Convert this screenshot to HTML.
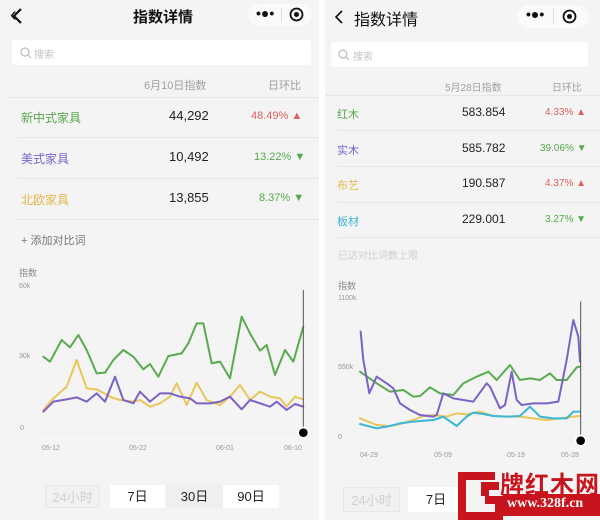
<!DOCTYPE html>
<html><head><meta charset="utf-8"><style>
*{margin:0;padding:0;box-sizing:border-box}
body{width:600px;height:520px;background:#fff;font-family:"Liberation Sans","Noto Sans CJK SC",sans-serif;position:relative;overflow:hidden}
.p{position:absolute;background:#f4f4f4}
.a{position:absolute;white-space:nowrap}
.line{position:absolute;height:1px;background:#e6e6e6}
.btn{position:absolute;background:#fff;font-size:13px;text-align:center;color:#222}
</style></head><body>
<!-- LEFT PANEL -->
<div class="p" style="left:0;top:0;width:319px;height:520px"></div>
<div class="a" style="left:10px;top:4px;font-size:20px;color:#111">&#x2039;</div>
<svg class="a" style="left:10px;top:7px" width="14" height="18"><path d="M11 2 L4 9 L11 16" fill="none" stroke="#111" stroke-width="2.2"/></svg>
<div class="a" style="left:133px;top:6px;font-size:15px;font-weight:bold;color:#111">指数详情</div>
<div class="a" style="left:248px;top:4px;width:64px;height:22px;border-radius:11px;background:#fafafa"></div>
<div class="a" style="left:256px;top:5px;font-size:14px;font-weight:bold;color:#111">•●•</div>
<div class="a" style="left:281px;top:8px;width:1px;height:14px;background:#ddd"></div>
<svg class="a" style="left:289px;top:7px" width="15" height="15"><circle cx="7.5" cy="7.5" r="6" fill="none" stroke="#111" stroke-width="1.8"/><circle cx="7.5" cy="7.5" r="2.5" fill="#111"/></svg>
<div class="a" style="left:12px;top:40px;width:299px;height:25px;background:#fff;border-radius:3px"></div>
<svg class="a" style="left:20px;top:47px" width="12" height="12"><circle cx="5" cy="5" r="4" fill="none" stroke="#bbb" stroke-width="1.2"/><path d="M8 8 L11 11" stroke="#bbb" stroke-width="1.2"/></svg>
<div class="a" style="left:34px;top:46px;font-size:10px;color:#c4c4c4">搜索</div>
<div class="a" style="left:144px;top:77px;font-size:11px;color:#a0a0a0">6月10日指数</div>
<div class="a" style="left:268px;top:77px;font-size:11px;color:#a0a0a0">日环比</div>
<div class="line" style="left:6px;top:97px;width:313px"></div>
<div class="a" style="left:21px;top:109px;font-size:12px;color:#58a84d">新中式家具</div>
<div class="a" style="left:169px;top:108px;font-size:13px;color:#222">44,292</div>
<div class="a" style="left:251px;top:110px;font-size:11px;color:#d9625d">48.49% ▲</div>
<div class="line" style="left:18px;top:137px;width:301px"></div>
<div class="a" style="left:21px;top:150px;font-size:12px;color:#7b63c8">美式家具</div>
<div class="a" style="left:169px;top:149px;font-size:13px;color:#222">10,492</div>
<div class="a" style="left:254px;top:151px;font-size:11px;color:#55a84c">13.22% ▼</div>
<div class="line" style="left:18px;top:178px;width:301px"></div>
<div class="a" style="left:21px;top:191px;font-size:12px;color:#e1b84a">北欧家具</div>
<div class="a" style="left:169px;top:190px;font-size:13px;color:#222">13,855</div>
<div class="a" style="left:259px;top:192px;font-size:11px;color:#55a84c">8.37% ▼</div>
<div class="line" style="left:18px;top:219px;width:301px"></div>
<div class="a" style="left:21px;top:232px;font-size:11px;color:#777">+ 添加对比词</div>
<div class="a" style="left:19px;top:266px;font-size:9px;color:#888">指数</div>
<div class="a" style="left:19px;top:283px;font-size:7px;color:#999">60k</div>
<div class="a" style="left:19px;top:353px;font-size:7px;color:#999">30k</div>
<div class="a" style="left:20px;top:425px;font-size:7px;color:#999">0</div>
<div class="a" style="left:42px;top:445px;font-size:7px;color:#999">05-12</div>
<div class="a" style="left:129px;top:445px;font-size:7px;color:#999">05-22</div>
<div class="a" style="left:216px;top:445px;font-size:7px;color:#999">06-01</div>
<div class="a" style="left:284px;top:445px;font-size:7px;color:#999">06-10</div>
<svg class="a" style="left:0;top:260px" width="320" height="260" viewBox="0 0 960 780">
<g stroke="#ececec" stroke-width="2"><path d="M120 88H910M120 305H910M120 517H910"/></g>
<g fill="none" stroke-width="6" stroke-linejoin="round" stroke-linecap="round">
<polyline stroke="#e9c55a" points="130,450 160,415 200,380 230,300 260,385 290,388 330,410 360,420 400,425 420,420 450,440 480,430 510,410 530,370 560,435 590,368 620,420 660,435 690,410 720,375 750,420 780,395 810,410 840,415 860,440 885,410 910,418"/>
<polyline stroke="#7b62c6" points="130,455 160,425 200,418 230,412 260,425 290,400 315,425 345,350 370,420 400,430 420,395 450,425 480,400 510,400 540,410 570,415 590,430 630,430 660,425 690,410 725,448 750,420 780,430 810,440 830,425 860,450 885,432 910,440"/>
<polyline stroke="#5aaa50" points="130,290 150,305 185,240 210,262 235,225 260,270 290,340 315,338 340,300 370,270 400,290 430,328 450,312 475,350 505,288 545,280 565,250 590,190 610,190 635,310 660,305 690,355 725,170 750,220 780,272 800,255 825,345 855,270 880,305 910,200"/>
</g>
<path d="M910 90V517" stroke="#555" stroke-width="3"/>
<circle cx="910" cy="518" r="18" fill="#fff"/><circle cx="910" cy="518" r="13" fill="#000"/>
</svg>
<div class="btn" style="left:45px;top:485px;width:55px;height:23px;line-height:23px;background:#f1f1f1;color:#d0d0d0;border:1px solid #e8e8e8">24小时</div>
<div class="btn" style="left:110px;top:485px;width:55px;height:23px;line-height:23px">7日</div>
<div class="btn" style="left:166px;top:485px;width:57px;height:23px;line-height:23px;background:#efefef">30日</div>
<div class="btn" style="left:223px;top:485px;width:56px;height:23px;line-height:23px">90日</div>

<!-- RIGHT PANEL -->
<div class="p" style="left:325px;top:0;width:275px;height:520px"></div>
<svg class="a" style="left:333px;top:9px" width="12" height="16"><path d="M9 2 L3 8 L9 14" fill="none" stroke="#111" stroke-width="1.6"/></svg>
<div class="a" style="left:354px;top:6px;font-size:16px;color:#111">指数详情</div>
<div class="a" style="left:517px;top:5px;width:72px;height:23px;border-radius:12px;background:#fafafa"></div>
<div class="a" style="left:526px;top:6px;font-size:14px;font-weight:bold;color:#111">•●•</div>
<div class="a" style="left:553px;top:9px;width:1px;height:14px;background:#ddd"></div>
<svg class="a" style="left:562px;top:9px" width="15" height="15"><circle cx="7.5" cy="7.5" r="6" fill="none" stroke="#111" stroke-width="1.8"/><circle cx="7.5" cy="7.5" r="2.5" fill="#111"/></svg>
<div class="a" style="left:331px;top:42px;width:257px;height:25px;background:#fff;border-radius:3px"></div>
<svg class="a" style="left:338px;top:49px" width="12" height="12"><circle cx="5" cy="5" r="4" fill="none" stroke="#bbb" stroke-width="1.2"/><path d="M8 8 L11 11" stroke="#bbb" stroke-width="1.2"/></svg>
<div class="a" style="left:353px;top:48px;font-size:10px;color:#c4c4c4">搜索</div>
<div class="a" style="left:445px;top:79px;font-size:10px;color:#a0a0a0">5月28日指数</div>
<div class="a" style="left:552px;top:79px;font-size:10px;color:#a0a0a0">日环比</div>
<div class="line" style="left:325px;top:95px;width:275px"></div>
<div class="a" style="left:337px;top:106px;font-size:11px;color:#58a84d">红木</div>
<div class="a" style="left:462px;top:105px;font-size:12px;color:#222">583.854</div>
<div class="a" style="left:545px;top:107px;font-size:10px;color:#d9625d">4.33% ▲</div>
<div class="line" style="left:337px;top:130px;width:263px"></div>
<div class="a" style="left:337px;top:142px;font-size:11px;color:#7b63c8">实木</div>
<div class="a" style="left:462px;top:141px;font-size:12px;color:#222">585.782</div>
<div class="a" style="left:540px;top:143px;font-size:10px;color:#55a84c">39.06% ▼</div>
<div class="line" style="left:337px;top:166px;width:263px"></div>
<div class="a" style="left:337px;top:177px;font-size:11px;color:#e1b84a">布艺</div>
<div class="a" style="left:462px;top:176px;font-size:12px;color:#222">190.587</div>
<div class="a" style="left:545px;top:178px;font-size:10px;color:#d9625d">4.37% ▲</div>
<div class="line" style="left:337px;top:202px;width:263px"></div>
<div class="a" style="left:337px;top:213px;font-size:11px;color:#3bb6d6">板材</div>
<div class="a" style="left:462px;top:212px;font-size:12px;color:#222">229.001</div>
<div class="a" style="left:545px;top:214px;font-size:10px;color:#55a84c">3.27% ▼</div>
<div class="line" style="left:337px;top:237px;width:263px"></div>
<div class="a" style="left:338px;top:247px;font-size:10px;color:#cfcfcf">已达对比词数上限</div>
<div class="a" style="left:338px;top:279px;font-size:9px;color:#888">指数</div>
<div class="a" style="left:338px;top:295px;font-size:7px;color:#999">1100k</div>
<div class="a" style="left:338px;top:364px;font-size:7px;color:#999">550k</div>
<div class="a" style="left:338px;top:434px;font-size:7px;color:#999">0</div>
<div class="a" style="left:360px;top:452px;font-size:7px;color:#999">04-29</div>
<div class="a" style="left:434px;top:452px;font-size:7px;color:#999">05-09</div>
<div class="a" style="left:507px;top:452px;font-size:7px;color:#999">05-19</div>
<div class="a" style="left:561px;top:452px;font-size:7px;color:#999">05-28</div>
<svg class="a" style="left:320px;top:270px" width="280" height="250" viewBox="0 0 840 750">
<g stroke="#ececec" stroke-width="2"><path d="M120 93H790M120 300H790M120 510H790"/></g>
<g fill="none" stroke-width="6" stroke-linejoin="round" stroke-linecap="round">
<polyline stroke="#e9c55a" points="120,445 170,465 210,468 240,462 280,450 310,438 340,435 380,440 410,430 440,433 480,425 520,438 560,440 600,440 640,445 680,450 720,445 760,440 780,438"/>
<polyline stroke="#3bb6d6" points="120,462 170,475 210,468 240,460 280,455 340,450 370,440 410,468 440,440 460,428 490,432 520,438 560,440 600,438 630,410 660,440 700,445 740,445 760,425 780,425"/>
<polyline stroke="#5aaa50" points="120,305 170,340 210,365 250,360 280,380 300,378 330,352 360,370 400,375 430,340 470,320 505,305 530,330 570,285 600,330 630,325 660,330 690,310 710,330 740,330 770,292 780,290"/>
<polyline stroke="#7b62c6" points="122,185 130,270 148,370 170,320 200,340 220,355 240,400 270,420 300,435 340,440 350,435 370,370 400,385 430,390 460,395 500,340 510,350 540,415 555,405 575,305 590,390 605,405 640,400 680,400 715,395 740,270 760,150 775,200 780,275"/>
</g>
<path d="M782 95V510" stroke="#555" stroke-width="3"/>
<circle cx="782" cy="512" r="18" fill="#fff"/><circle cx="782" cy="512" r="13" fill="#000"/>
</svg>
<div class="btn" style="left:343px;top:487px;width:57px;height:25px;line-height:25px;background:#f1f1f1;color:#d0d0d0;border:1px solid #e8e8e8">24小时</div>
<div class="btn" style="left:408px;top:487px;width:56px;height:25px;line-height:25px">7日</div>
<!-- watermark -->
<svg class="a" style="left:455px;top:470px" width="145" height="50" viewBox="0 0 145 50">
<path d="M3 2H40V10H11V42H40V34H30V26H48V50H3Z" fill="#c8141c"/>
<path d="M26 12H44V20H34V26H26Z" fill="#c8141c"/>
<rect x="48" y="24" width="97" height="22" fill="#c8141c"/>
</svg>
<div class="a" style="left:500px;top:465px;font-size:24px;font-weight:bold;color:#c8141c;letter-spacing:1px">牌红木网</div>
<div class="a" style="left:507px;top:496px;font-size:14px;font-weight:bold;color:#fff;font-family:'Liberation Serif',serif">www.328f.cn</div>
</body></html>
